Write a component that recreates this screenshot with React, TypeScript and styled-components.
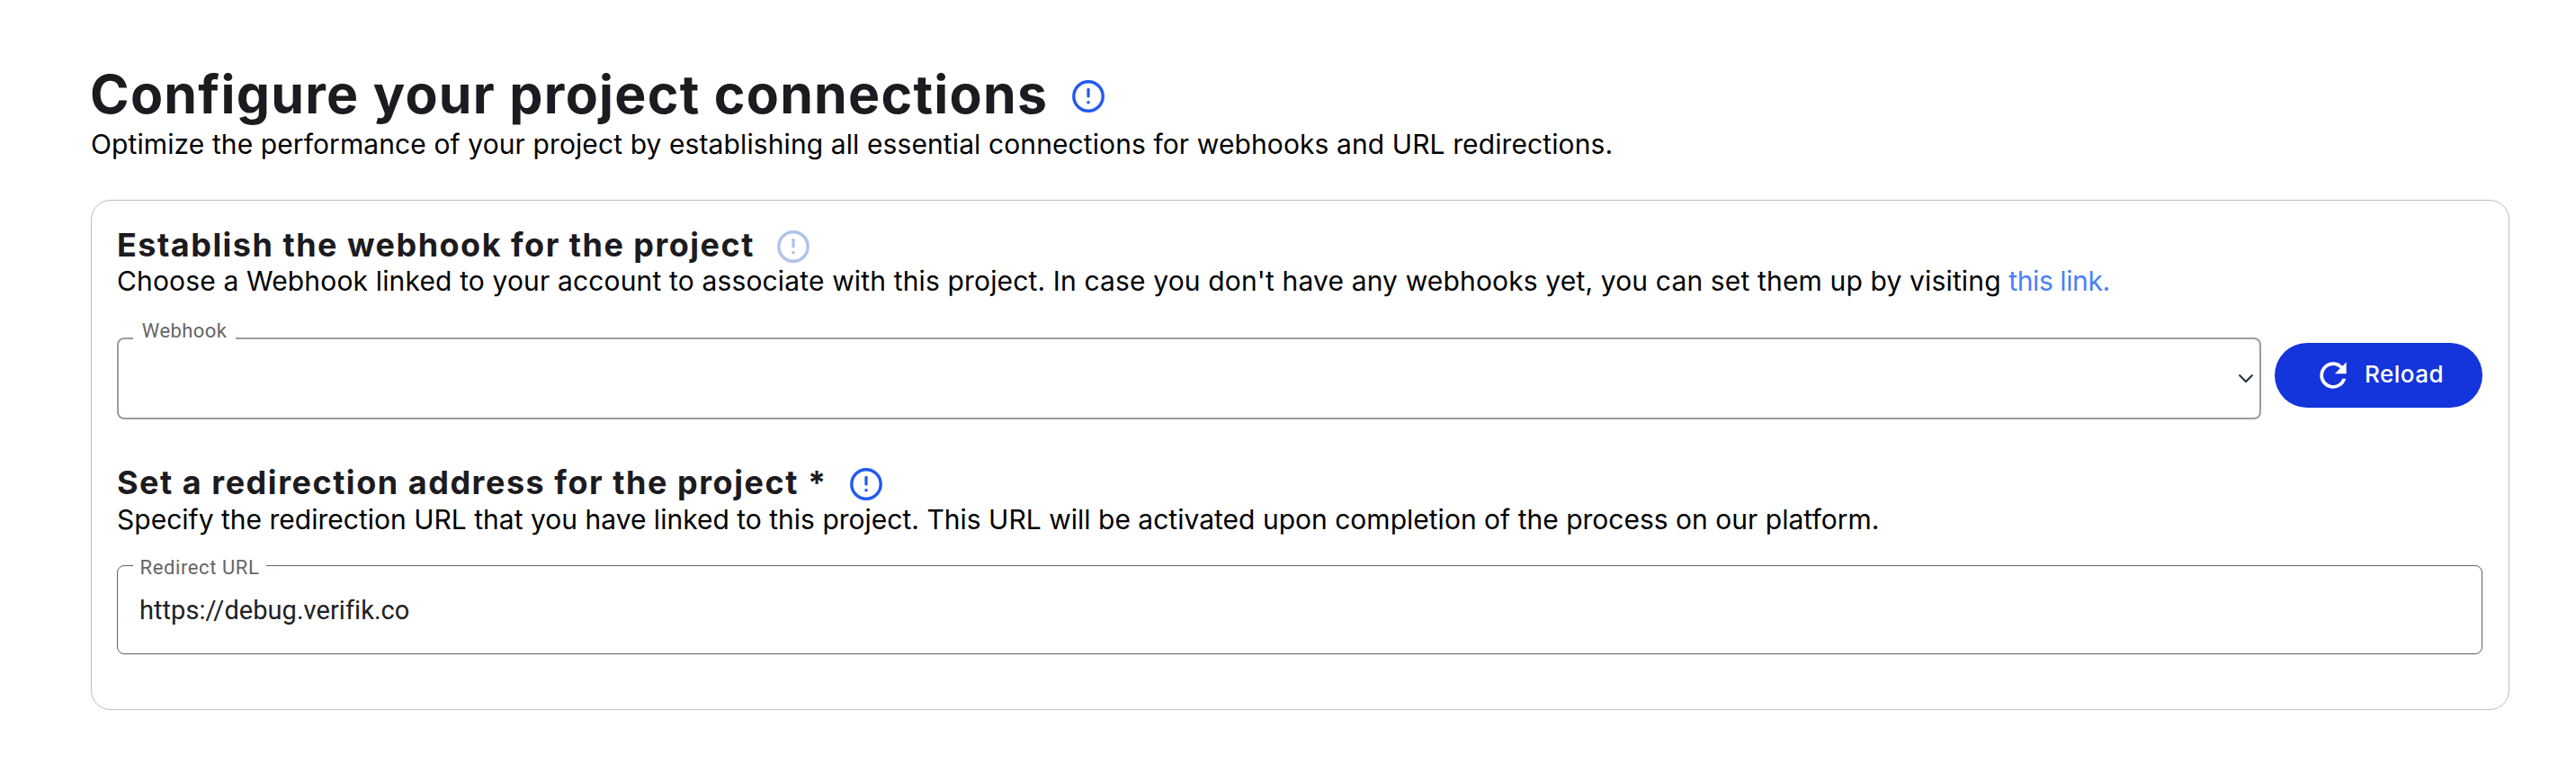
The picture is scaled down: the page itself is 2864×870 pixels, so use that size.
import React from 'react';
import styled, { createGlobalStyle } from 'styled-components';

const GlobalStyle = createGlobalStyle`
  *, *::before, *::after { box-sizing: border-box; }
  body {
    margin: 0;
    background: #fff;
    color: #000;
    font-family: Inter, sans-serif;
  }
`;

const Page = styled.main`
  padding: 71px 74px 0 101px;
`;

const TitleRow = styled.header`
  display: flex;
  align-items: center;
  gap: 27px;
  height: 67px;
`;

const Title = styled.h1`
  margin: 0 0 0 -1px;
  font-size: 59px;
  font-weight: 700;
  line-height: 68px;
  letter-spacing: 1.25px;
  white-space: nowrap;
  color: #1c1b20;
`;

const HeadingRow = styled.div`
  display: flex;
  align-items: center;
  gap: 25px;
  height: 43px;
`;

const Heading = styled.h2<{ $tracking: number }>`
  margin: 0;
  font-size: 36px;
  font-weight: 700;
  line-height: 43px;
  letter-spacing: ${(p) => p.$tracking}px;
  white-space: nowrap;
  color: #1c1b20;
`;

const Text = styled.p<{ $line: number; $tracking: number; $top?: number }>`
  margin: ${(p) => p.$top ?? 0}px 0 0;
  font-size: 30px;
  line-height: ${(p) => p.$line}px;
  letter-spacing: ${(p) => p.$tracking}px;
  white-space: nowrap;
`;

const Link = styled.a`
  color: #4a80f5;
  letter-spacing: -0.4px;
  text-decoration: none;
`;

const Card = styled.section`
  margin-top: 39px;
  padding: 28px 29px 61px 28px;
  border: 1px solid #bdbdbd;
  border-radius: 22px;
`;

const Group = styled.div<{ $top?: number }>`
  margin-top: ${(p) => p.$top ?? 0}px;
`;

const SelectRow = styled.div`
  display: flex;
  align-items: flex-start;
  gap: 15px;
  margin-top: 45px;
`;

const SelectField = styled.div`
  position: relative;
  display: flex;
  align-items: center;
  justify-content: flex-end;
  flex: 1;
  height: 91px;
  padding: 0 6px 0 0;
  border: 2px solid #9c9c9c;
  border-radius: 8px;
`;

const InputField = styled.div`
  position: relative;
  height: 99px;
  margin-top: 33px;
  padding: 32px 24px 0;
  border: 1px solid #626262;
  border-radius: 8px;
`;

const FieldLabel = styled.label<{ $top: number; $left: number; $width: number; $tracking: number }>`
  position: absolute;
  top: ${(p) => p.$top}px;
  left: ${(p) => p.$left}px;
  width: ${(p) => p.$width}px;
  background: #fff;
  font: 400 22px/24px Roboto, sans-serif;
  letter-spacing: ${(p) => p.$tracking}px;
  text-align: center;
  white-space: nowrap;
  color: #666;
`;

const Value = styled.div`
  font: 400 29px/34px Roboto, sans-serif;
  letter-spacing: 0.05px;
  color: #202124;
`;

const ReloadButton = styled.button`
  display: flex;
  align-items: center;
  width: 231px;
  height: 72px;
  margin-top: 6px;
  padding: 0 0 0 43px;
  gap: 13px;
  border: 0;
  border-radius: 36px;
  background: #1434dc;
  color: #fff;
  font: 500 26px/36px Inter, sans-serif;
  letter-spacing: 0.5px;
`;

const ButtonText = styled.span`
  padding-bottom: 2px;
`;

const InfoSvg = styled.svg<{ $drop: number }>`
  flex: none;
  margin-top: ${(p) => p.$drop}px;
`;

function InfoIcon({ color = '#2259f2', drop = 2 }: { color?: string; drop?: number }) {
  return (
    <InfoSvg $drop={drop} width="36" height="36" viewBox="0 0 36 36" fill="none">
      <circle cx="18" cy="18" r="16.2" stroke={color} strokeWidth="3.4" />
      <path d="M18 10.3v7.6" stroke={color} strokeWidth="3.2" strokeLinecap="round" />
      <circle cx="18" cy="24.8" r="1.8" fill={color} />
    </InfoSvg>
  );
}

function ChevronIcon() {
  return (
    <svg width="18" height="12" viewBox="0 0 18 12" fill="none">
      <path d="M1.5 1.5 9 9 16.5 1.5" stroke="#27303f" strokeWidth="2" />
    </svg>
  );
}

function RefreshIcon() {
  return (
    <svg width="44" height="44" viewBox="0 0 24 24" fill="currentColor">
      <path d="M17.65 6.35A7.96 7.96 0 0 0 12 4a8 8 0 1 0 7.73 10h-2.08A6 6 0 1 1 12 6c1.66 0 3.14.69 4.22 1.78L13 11h7V4z" />
    </svg>
  );
}

export default function App() {
  return (
    <>
      <GlobalStyle />
      <Page>
        <TitleRow>
          <Title>Configure your project connections</Title>
          <InfoIcon drop={5} />
        </TitleRow>
        <Text $line={45} $tracking={0.1}>
          Optimize the performance of your project by establishing all essential connections for webhooks and URL
          redirections.
        </Text>

        <Card>
          <Group>
            <HeadingRow>
              <Heading $tracking={1.48}>Establish the webhook for the project</Heading>
              <InfoIcon color="#afc3ea" />
            </HeadingRow>
            <Text $line={36} $tracking={0.15}>
              Choose a Webhook linked to your account to associate with this project. In case you don't have any
              webhooks yet, you can set them up by visiting <Link>this link.</Link>
            </Text>
            <SelectRow>
              <SelectField>
                <FieldLabel $top={-21} $left={16} $width={114} $tracking={0.4}>Webhook</FieldLabel>
                <ChevronIcon />
              </SelectField>
              <ReloadButton type="button">
                <RefreshIcon />
                <ButtonText>Reload</ButtonText>
              </ReloadButton>
            </SelectRow>
          </Group>

          <Group $top={49}>
            <HeadingRow>
              <Heading $tracking={1.53}>Set a redirection address for the project *</Heading>
              <InfoIcon />
            </HeadingRow>
            <Text $line={36} $tracking={0.01} $top={1}>
              Specify the redirection URL that you have linked to this project. This URL will be activated upon
              completion of the process on our platform.
            </Text>
            <InputField>
              <FieldLabel $top={-10} $left={17} $width={148} $tracking={0.6}>Redirect URL</FieldLabel>
              <Value>https://debug.verifik.co</Value>
            </InputField>
          </Group>
        </Card>
      </Page>
    </>
  );
}
